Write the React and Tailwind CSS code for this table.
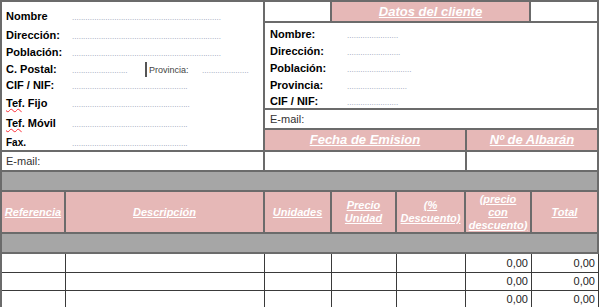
import React from 'react';

const LINE = 'border-[#6b6b6b]';

// a run of periods as wide as the spreadsheet's dotted fill
const Dots = ({ w }) => (
    <span
        className="whitespace-nowrap text-[8px] leading-[8px] text-[#8b98b0]"
        style={{ width: w }}
    >
        {'.'.repeat(Math.floor(w / 2.3))}
    </span>
);

const Field = ({ h, label, dots, labelW = 66, small }) => (
    <div className="flex items-center" style={{ height: h }}>
        <div className="flex items-baseline">
            <span
                className={`${small ? 'text-[10px]' : 'text-[11px]'} font-bold text-black`}
                style={{ width: labelW }}
            >
                {label}
            </span>
            <Dots w={dots} />
        </div>
    </div>
);

const HeadCell = ({ w, children }) => (
    <div
        className={`flex h-full flex-col items-center justify-center border-r-2 ${LINE} bg-[#e6b8b7] text-center text-[11px] leading-[13px] font-bold italic text-white underline`}
        style={{ width: w }}
    >
        {children}
    </div>
);

const cols = [64, 199, 67, 65, 69, 66, 67];

const DataRow = ({ h }) => (
    <div className="flex border-b border-[#3a3a3a]" style={{ height: h }}>
        {cols.map((w, i) => (
            <div
                key={i}
                className="flex items-center justify-end border-r border-[#3a3a3a] pr-[3px] text-[11px] text-[#222]"
                style={{ width: w }}
            >
                {i >= 5 ? '0,00' : ''}
            </div>
        ))}
    </div>
);

export default function App() {
    return (
        <div className="h-[307px] w-[600px] overflow-hidden bg-white font-['Liberation_Sans',Arial,sans-serif]">
            <div className={`w-[599px] border-t-2 border-l-2 ${LINE}`}>
                {/* upper block */}
                <div className="flex h-[170px]">
                    {/* sender */}
                    <div className="flex w-[263px] flex-col">
                        <div className={`h-[150px] border-r-2 border-b-2 ${LINE} pt-[4px] pl-[4px]`}>
                            <Field h={20} label="Nombre" dots={156} />
                            <Field h={18} label="Dirección:" dots={156} />
                            <Field h={17} label="Población:" dots={156} />
                            <div className="flex h-[16px] items-center">
                                <div className="flex items-baseline">
                                    <span className="w-[66px] text-[11px] font-bold text-black">C. Postal:</span>
                                    <Dots w={58} />
                                    <span className="ml-[15px] h-[15px] w-[2px] self-center bg-[#555]" />
                                    <span className="ml-[2px] w-[53px] text-[9px] text-[#444]">Provincia:</span>
                                    <Dots w={50} />
                                </div>
                            </div>
                            <Field h={17} label="CIF / NIF:" dots={121} />
                            <div className="flex h-[18px] items-center">
                                <div className="flex items-baseline">
                                    <span className="w-[66px] text-[11px] font-bold text-black">
                                        <span className="underline decoration-red-500 decoration-wavy decoration-1">Tef</span>. Fijo
                                    </span>
                                    <Dots w={123} />
                                </div>
                            </div>
                            <div className="flex h-[22px] items-center">
                                <div className="flex items-baseline">
                                    <span className="w-[66px] text-[11px] font-bold text-black">
                                        <span className="underline decoration-red-500 decoration-wavy decoration-1">Tef</span>. Móvil
                                    </span>
                                    <Dots w={121} />
                                </div>
                            </div>
                            <Field h={16} label="Fax." dots={121} small />
                        </div>
                        <div className={`flex h-[20px] items-center border-r-2 border-b-2 ${LINE} pl-[4px] text-[11px] text-[#333]`}>
                            E-mail:
                        </div>
                    </div>

                    {/* client */}
                    <div className="flex w-[334px] flex-col">
                        <div className="flex h-[21px]">
                            <div className={`w-[67px] border-r-2 border-b-2 ${LINE}`} />
                            <div className={`flex w-[199px] items-center justify-center border-r-2 border-b-2 ${LINE} bg-[#e6b8b7] text-[13px] font-bold italic text-white underline`}>
                                Datos del cliente
                            </div>
                            <div className={`flex-1 border-r-2 border-b-2 ${LINE}`} />
                        </div>
                        <div className={`h-[87px] border-r-2 border-b-2 ${LINE} pt-[3px] pl-[5px]`}>
                            <Field h={17} label="Nombre:" dots={53} labelW={77} />
                            <Field h={17} label="Dirección:" dots={57} labelW={77} />
                            <Field h={17} label="Población:" dots={67} labelW={77} />
                            <Field h={17} label="Provincia:" dots={63} labelW={77} />
                            <Field h={14} label="CIF / NIF:" dots={53} labelW={77} />
                        </div>
                        <div className={`flex h-[20px] items-center border-r-2 border-b-2 ${LINE} pl-[5px] text-[11px] text-[#333]`}>
                            E-mail:
                        </div>
                        <div className="flex h-[22px]">
                            <div className={`flex w-[202px] items-center justify-center border-r-2 border-b-2 ${LINE} bg-[#e6b8b7] text-[13px] font-bold italic text-white underline`}>
                                Fecha de Emision
                            </div>
                            <div className={`flex flex-1 items-center justify-center border-r-2 border-b-2 ${LINE} bg-[#e6b8b7] text-[13px] font-bold italic text-white underline`}>
                                Nº de Albarán
                            </div>
                        </div>
                        <div className="flex h-[20px]">
                            <div className={`w-[202px] border-r-2 border-b-2 ${LINE}`} />
                            <div className={`flex-1 border-r-2 border-b-2 ${LINE}`} />
                        </div>
                    </div>
                </div>

                {/* items table */}
                <div className={`h-[20px] border-r-2 border-b-2 ${LINE} bg-[#a6a6a6]`} />
                <div className={`flex h-[42px] border-b-2 ${LINE}`}>
                    <HeadCell w={64}>Referencia</HeadCell>
                    <HeadCell w={199}>Descripción</HeadCell>
                    <HeadCell w={67}>Unidades</HeadCell>
                    <HeadCell w={65}>Precio<br />Unidad</HeadCell>
                    <HeadCell w={69}>(%<br />Descuento)</HeadCell>
                    <HeadCell w={66}>(precio<br />con<br />descuento)</HeadCell>
                    <HeadCell w={67}>Total</HeadCell>
                </div>
                <div className={`h-[20px] border-r-2 border-b-2 ${LINE} bg-[#a6a6a6]`} />
                <DataRow h={19} />
                <DataRow h={18} />
                <DataRow h={18} />
            </div>
        </div>
    );
}
